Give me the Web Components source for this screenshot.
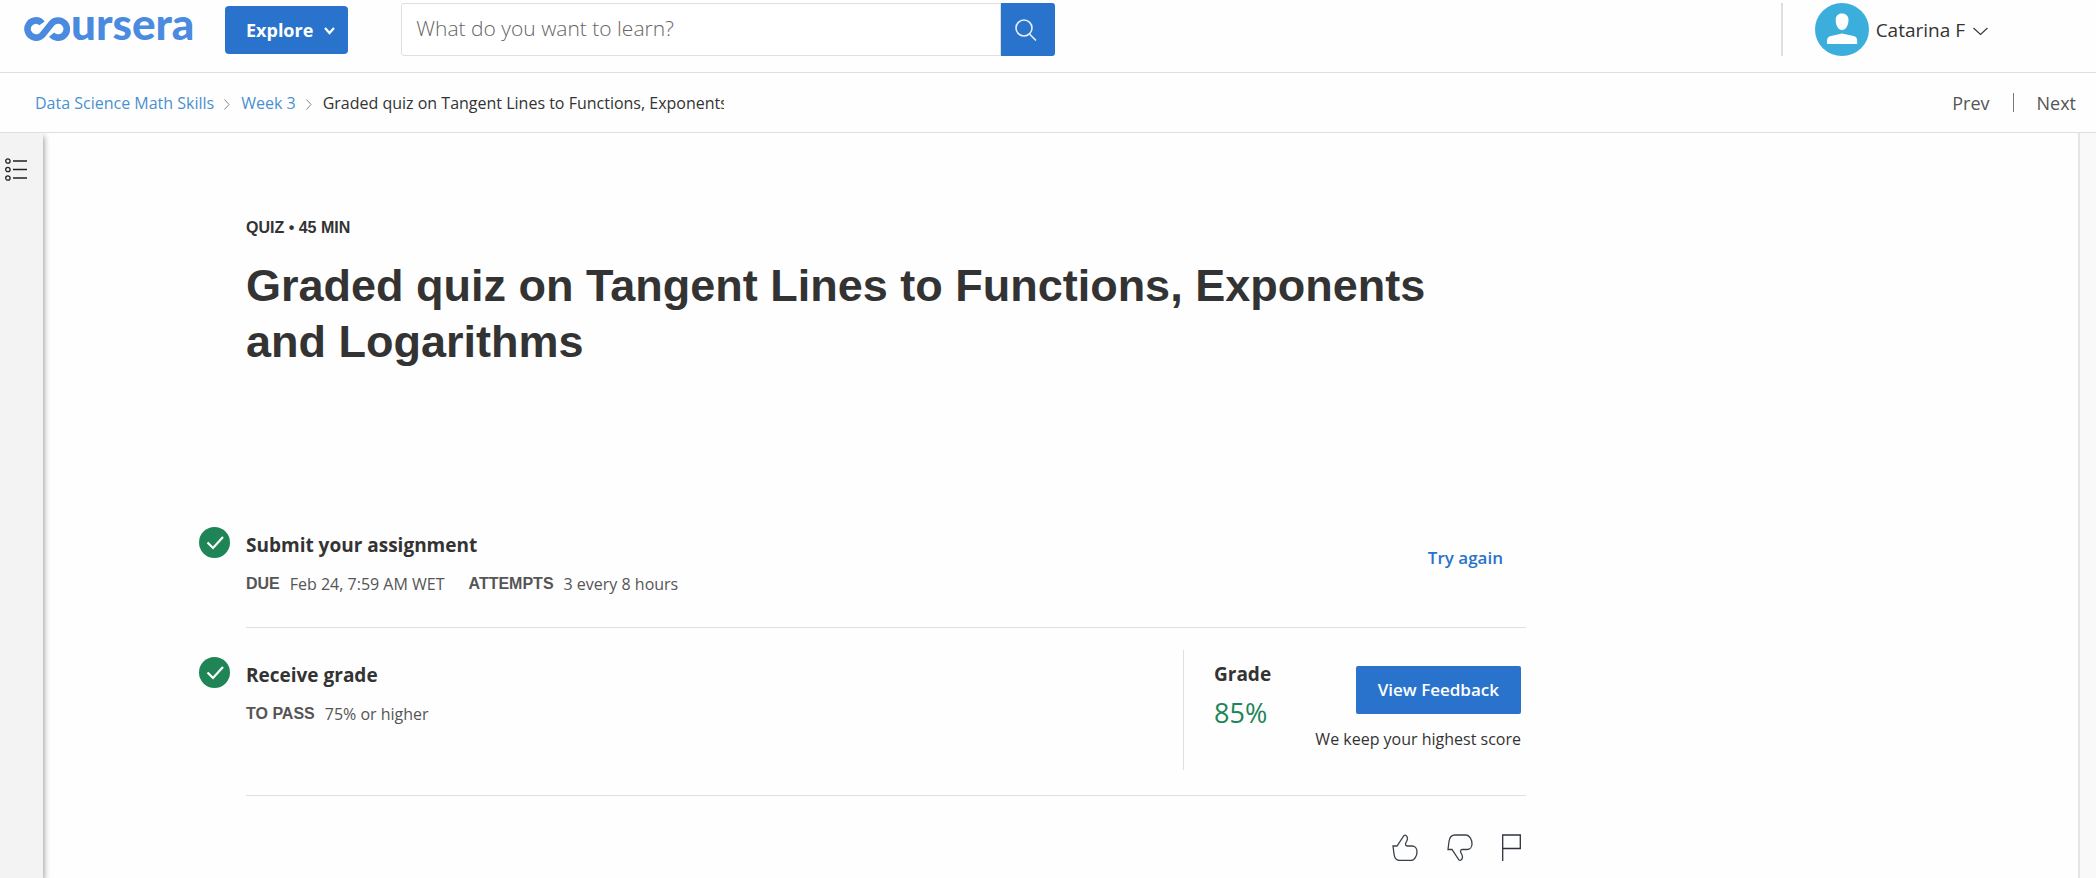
<!DOCTYPE html>
<html lang="en">
<head>
<meta charset="utf-8">
<title>Graded quiz on Tangent Lines to Functions, Exponents and Logarithms</title>
<style>
  :root {
    --blue: #2a73cc;
    --link: #4a90cf;
    --green: #208556;
    --ink: #333;
    --muted: #555;
    --line: #dfdfdf;
    --arial: "Liberation Sans", Arial, sans-serif;
  }
  body {
    margin: 0;
    min-height: 100vh;
    display: flex;
    flex-direction: column;
    background: #fefefe;
    color: var(--ink);
    font: 16px/24px "Open Sans", "Noto Sans", sans-serif;
  }
</style>
</head>
<body>
<site-header></site-header>
<crumb-bar></crumb-bar>
<course-shell>
  <quiz-intro></quiz-intro>
  <quiz-step heading="Submit your assignment">
    <step-fact slot="facts" label="DUE">Feb 24, 7:59 AM WET</step-fact>
    <step-fact slot="facts" label="ATTEMPTS">3 every 8 hours</step-fact>
    <try-again slot="aside"></try-again>
  </quiz-step>
  <quiz-step heading="Receive grade">
    <step-fact slot="facts" label="TO PASS">75% or higher</step-fact>
    <grade-panel slot="aside"></grade-panel>
  </quiz-step>
  <feedback-bar></feedback-bar>
</course-shell>

<script>
const define = (name, html) => {
  const template = document.createElement('template');
  template.innerHTML = `<style>*,:host{box-sizing:border-box}button,input{font:inherit;margin:0}svg{display:block;fill:none}</style>` + html;
  customElements.define(name, class extends HTMLElement {
    constructor() {
      super();
      this.attachShadow({ mode: 'open' }).append(template.content.cloneNode(true));
    }
    connectedCallback() {
      for (const el of this.shadowRoot.querySelectorAll('[data-attr]'))
        el.textContent = this.getAttribute(el.dataset.attr);
    }
  });
};

define('brand-logo', `
<style>
  :host { display: block; }
  a { display: flex; align-items: center; height: 48px; color: #4b8bdf; text-decoration: none; font: 900 44px/48px Lato, sans-serif; }
  span { height: 48px; line-height: 36px; }
</style>
<a href="#" aria-label="coursera">
  <svg width="47" height="24" viewBox="0 0 47 24" stroke="currentColor" stroke-width="6.6">
    <path d="M18 6.4C16.600 4.500 14.300 3.400 12 3.400A8.600 8.600 0 1 0 18.300 18L27.700 6.400A8.600 8.600 0 1 1 27.600 17.600"/>
  </svg><span>ursera</span>
</a>`);

define('search-box', `
<style>
  :host { display: block; flex: 0 1 654px; }
  form { display: flex; height: 53px; margin: 0; }
  input { flex: 1; min-width: 0; border: 1px solid var(--line); border-radius: 3px 0 0 3px; padding: 0 14px 4px; background: #fff; color: var(--ink); font-size: 21px; font-weight: 300; outline: 0; }
  input::placeholder { color: #666; opacity: 1; }
  button { width: 54px; border: 0; border-radius: 0 3px 3px 0; background: var(--blue); padding: 0 0 0 14px; }
</style>
<form role="search">
  <input type="search" aria-label="Search" placeholder="What do you want to learn?">
  <button type="button" aria-label="Search">
    <svg width="22" height="22" viewBox="0 0 22 22" stroke="#e6eefa" stroke-width="1.6">
      <circle cx="9" cy="9" r="8"/><path d="M14.500 15L21 21.500"/>
    </svg>
  </button>
</form>`);

define('user-menu', `
<style>
  :host { display: flex; align-items: center; height: 53px; border-left: 2px solid var(--line); padding-left: 32px; }
  button { display: flex; align-items: center; border: 0; background: none; padding: 0; color: var(--ink); font-size: 19px; line-height: 24px; }
  .pic { margin-right: 7px; }
  .chev { margin-left: 8px; margin-top: 4px; }
</style>
<button type="button">
  <svg class="pic" width="54" height="53" viewBox="0 0 54 53">
    <ellipse cx="27" cy="26.500" rx="27" ry="26.500" fill="#3caedc"/>
    <path fill="#fff" d="M27 10.500C31 10.500 33.500 13 33.500 17C33.500 22 31 27 27 27S20.700 22 20.700 17C20.700 13 23 10.500 27 10.500ZM12 41V38C12 35 13.500 33.500 16 33L27 30.500L38.500 33C41 33.500 42.200 35 42.200 38V41Z"/>
  </svg>
  Catarina F
  <svg class="chev" width="15" height="9" viewBox="0 0 15 9" stroke="#333" stroke-width="1.100"><path d="M.5 1L7.500 7.500L14.500 1"/></svg>
</button>`);

define('site-header', `
<style>
  :host { display: flex; height: 73px; padding: 3px 108px 0 24px; border-bottom: 1px solid var(--line); align-items: flex-start; }
  brand-logo { width: 201px; margin-top: 2px; }
  .explore { display: flex; align-items: center; gap: 11px; height: 48px; margin: 3px 53px 0 0; padding: 0 13px 0 21px; border: 0; border-radius: 4px; background: var(--blue); color: #fff; font-size: 18px; font-weight: 700; }
  .explore svg { margin-top: 2px; }
  user-menu { margin-left: auto; }
</style>
<brand-logo></brand-logo>
<button class="explore" type="button">Explore
  <svg width="11" height="8" viewBox="0 0 11 8" stroke="#fff" stroke-width="2.200"><path d="M1 1L5.500 6L10 1"/></svg>
</button>
<search-box></search-box>
<user-menu></user-menu>`);

define('crumb-bar', `
<style>
  :host { display: flex; align-items: center; justify-content: space-between; height: 60px; padding: 0 20px 0 35px; border-bottom: 1px solid var(--line); }
  nav { display: flex; align-items: center; }
  nav svg { margin: 4px 11px 0 10px; }
  nav a { color: var(--link); text-decoration: none; }
  .here { width: 401px; overflow: hidden; white-space: nowrap; }
  .pager { font-size: 18px; }
  .pager a { color: var(--muted); }
  .pager i { width: 1px; height: 19px; background: #777; margin: 0 23px; }
</style>
<nav aria-label="Breadcrumb">
  <a href="#">Data Science Math Skills</a>
  <svg width="6" height="11" viewBox="0 0 6 11" stroke="#888"><path d="M.5 .5L5 5.500L.5 10.500"/></svg>
  <a href="#">Week 3</a>
  <svg width="6" height="11" viewBox="0 0 6 11" stroke="#888"><path d="M.5 .5L5 5.500L.5 10.500"/></svg>
  <span class="here">Graded quiz on Tangent Lines to Functions, Exponents</span>
</nav>
<nav class="pager" aria-label="Lesson">
  <a href="#">Prev</a><i></i><a href="#">Next</a>
</nav>`);

define('course-shell', `
<style>
  :host { flex: 1; display: flex; }
  aside { flex: 0 0 43px; background: #f3f3f3; box-shadow: 1px 3px 6px rgba(0,0,0,.4); clip-path: inset(0 -12px 0 0); }
  aside button { border: 0; background: none; padding: 25px 0 0 5px; }
  main { flex: 1; min-width: 0; padding: 83px 24px 0 155px; }
  .content { max-width: 1328px; }
  .rail { flex: 0 0 18px; background: #f9f9f9; border-left: 2px solid #e5e5e5; }
</style>
<aside>
  <button type="button" aria-label="Show lessons">
    <svg width="22" height="23" viewBox="0 0 22 23" stroke="#222" stroke-width="1.300">
      <circle cx="2.900" cy="3" r="2.200"/><circle cx="2.900" cy="11.500" r="2.200"/><circle cx="2.900" cy="20" r="2.200"/>
      <path d="M8 3H22M8 11.500H22M8 20H22"/>
    </svg>
  </button>
</aside>
<main><div class="content"><slot></slot></div></main>
<div class="rail"></div>`);

define('quiz-intro', `
<style>
  :host { display: block; margin: 0 0 128px 48px; font-family: var(--arial); font-weight: 700; }
  p { margin: 0 0 18px; }
  h1 { margin: 0; max-width: 1240px; font-size: 45px; line-height: 56px; }
</style>
<p>QUIZ • 45 MIN</p>
<h1>Graded quiz on Tangent Lines to Functions, Exponents and Logarithms</h1>`);

define('quiz-step', `
<style>
  :host { display: flex; }
  .mark { flex: 0 0 48px; padding: 29px 0 0 1px; }
  .row { flex: 1; display: flex; justify-content: space-between; min-height: 130px; border-bottom: 1px solid var(--line); }
  h2 { margin: 35px 0 15px; font-size: 19px; line-height: 24px; }
  .facts { display: flex; gap: 24px; }
</style>
<div class="mark">
  <svg width="31" height="31" viewBox="0 0 31 31">
    <circle cx="15.500" cy="15.500" r="15.500" fill="var(--green)"/>
    <path d="M8.500 15.500L14 21L24 10" stroke="#fff" stroke-width="2.200"/>
  </svg>
</div>
<div class="row">
  <div><h2 data-attr="heading"></h2><div class="facts"><slot name="facts"></slot></div></div>
  <slot name="aside"></slot>
</div>`);

define('step-fact', `
<style>
  :host { display: flex; gap: 10px; color: var(--muted); }
  b { font-family: var(--arial); }
</style>
<b data-attr="label"></b><span><slot></slot></span>`);

define('try-again', `
<style>
  :host { display: block; padding: 48px 23px 0 0; }
  button { border: 0; padding: 0; background: none; color: var(--blue); font-size: 17px; font-weight: 600; line-height: 24px; }
</style>
<button type="button">Try again</button>`);

define('grade-panel', `
<style>
  :host { display: flex; width: 343px; height: 120px; margin: 22px 0 25px; padding: 12px 5px 0 30px; border-left: 1px solid var(--line); justify-content: space-between; }
  h3 { margin: 0 0 11px; font-size: 19px; line-height: 24px; }
  .score { color: var(--green); font-size: 27px; line-height: 32px; }
  .action { display: flex; flex-direction: column; align-items: flex-end; gap: 13px; padding-top: 4px; }
  button { height: 48px; padding: 0 22px; border: 0; border-radius: 2px; background: var(--blue); color: #fff; font-size: 17px; font-weight: 600; }
</style>
<div><h3>Grade</h3><div class="score">85%</div></div>
<div class="action">
  <button type="button">View Feedback</button>
  <span>We keep your highest score</span>
</div>`);

define('feedback-bar', `
<style>
  :host { display: flex; justify-content: flex-end; gap: 29px; padding: 38px 5px 16px 0; }
  button { border: 0; background: none; padding: 0; }
</style>
<button type="button" aria-label="Like">
  <svg width="26" height="27" viewBox="0 0 26 27" stroke="#3b414b" stroke-width="1.300"><path d="M1 12H5L12 1.500C13.500 .5 15.500 2 15.500 4.500C15.500 7 13.500 8.500 13.500 10C13.500 11.500 14 12 15 12H20C23 12 25 14.500 25 17.500C25 22 22.500 26.500 19 26.500H8C4 26.500 2.500 24 2 20Z"/></svg>
</button>
<button type="button" aria-label="Dislike">
  <svg width="26" height="27" viewBox="0 0 26 27" stroke="#3b414b" stroke-width="1.300"><path d="M1 15.500H5L12 26C13.500 27 15.500 25.500 15.500 23C15.500 20.500 13.500 19 13.500 17.500C13.500 16 14 15.500 15 15.500H20C23 15.500 25 13 25 10C25 5.500 22.500 1 19 1H8C4 1 2.500 3.500 2 7.500Z"/></svg>
</button>
<button type="button" aria-label="Report a problem">
  <svg width="19" height="27" viewBox="0 0 19 27" stroke="#2c323c" stroke-width="1.300"><path d="M.7 27V1H18.300V14.500H.7"/></svg>
</button>`);
</script>
</body>
</html>
